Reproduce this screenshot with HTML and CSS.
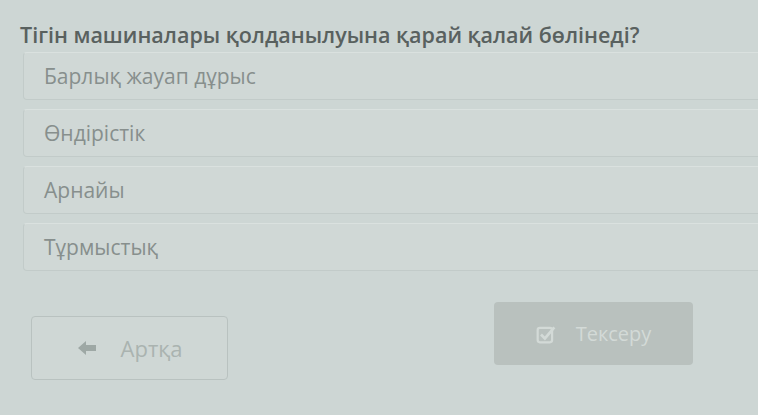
FILE: index.html
```html
<!DOCTYPE html>
<html lang="kk">
<head>
    <meta charset="UTF-8">
    <meta name="viewport" content="width=device-width, initial-scale=1.0">
    <title>Тест</title>
    <link rel="stylesheet" href="styles.css">
</head>
<body>
    <div class="quiz">
        <h2 class="question">Тігін машиналары қолданылуына қарай қалай бөлінеді?</h2>

        <div class="answers">
            <div class="answer">Барлық жауап дұрыс</div>
            <div class="answer">Өндірістік</div>
            <div class="answer">Арнайы</div>
            <div class="answer">Тұрмыстық</div>
        </div>

        <div class="actions">
            <button class="btn back">
                <svg class="icon" width="20" height="16" viewBox="0 0 20 16">
                    <path d="M1 8 L9 1 L9 5 L19 5 L19 11 L9 11 L9 15 Z" fill="#9ea8a5"/>
                </svg>
                Артқа
            </button>
            <button class="btn check" disabled>
                <svg class="icon" width="20" height="20" viewBox="0 0 18 18">
                    <rect x="1.5" y="3.5" width="13" height="13" rx="2" fill="none" stroke="#d3dad7" stroke-width="2"/>
                    <path d="M4.5 9.5 L8 13 L16.5 3" fill="none" stroke="#d3dad7" stroke-width="2.4"/>
                </svg>
                Тексеру
            </button>
        </div>
    </div>
</body>
</html>
```

FILE: styles.css
```css
body {
    font-family: "Open Sans", "Noto Sans", sans-serif;
    margin: 0;
    background-color: #cdd6d4;
    overflow: hidden;
}
.quiz {
    padding: 20px 0 0 20px;
}
.question {
    margin: 0 0 2px 0;
    font-size: 21.5px;
    line-height: 30px;
    font-weight: 600;
    color: #59615f;
}
.answers {
    margin-left: 3px;
    margin-right: -20px;
    display: flex;
    flex-direction: column;
    gap: 9px;
}
.answer {
    height: 46px;
    display: flex;
    align-items: center;
    padding-left: 20px;
    font-size: 21px;
    color: #878f8d;
    background-color: #d0d8d6;
    border: 1px solid #c2cbc9;
    border-top-color: #dae1df;
    border-radius: 4px;
}
.actions {
    display: flex;
    align-items: flex-start;
    margin-top: 31px;
}
.btn {
    display: flex;
    align-items: center;
    justify-content: center;
    gap: 20px;
    font-family: "Open Sans", "Noto Sans", sans-serif;
    font-size: 20px;
    border-radius: 4px;
}
.back {
    margin-left: 11px;
    margin-top: 14px;
    width: 197px;
    height: 64px;
    gap: 24px;
    font-size: 22px;
    background-color: #cfd7d5;
    border: 1px solid #b9c2c0;
    color: #aab3b0;
}
.check {
    margin-left: 266px;
    width: 199px;
    height: 63px;
    background-color: #b9c1be;
    border: none;
    color: #d3dad7;
}
```
